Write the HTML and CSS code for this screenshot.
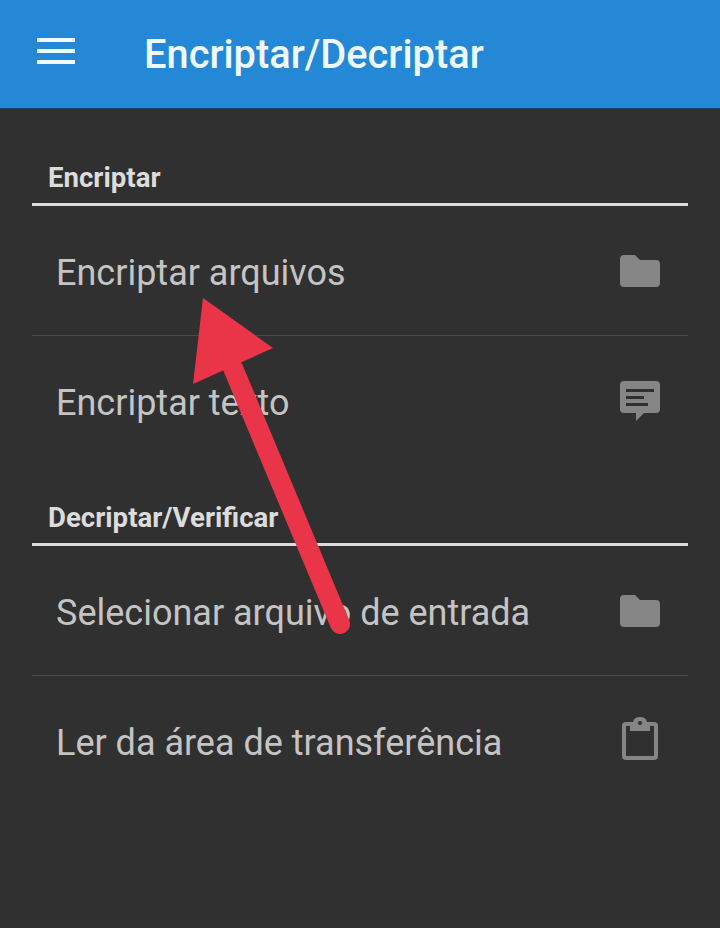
FILE: index.html
```html
<!DOCTYPE html>
<html>
<head>
    <title>Encriptar/Decriptar</title>
    <link rel="stylesheet" href="styles.css">
</head>
<body>
    <div class="toolbar">
        <svg class="menu-icon" width="38" height="26" viewBox="0 0 38 26">
            <rect x="0" y="0" width="38" height="4" fill="#eefaff"/>
            <rect x="0" y="11" width="38" height="4" fill="#eefaff"/>
            <rect x="0" y="22" width="38" height="4" fill="#eefaff"/>
        </svg>
        <h1>Encriptar/Decriptar</h1>
    </div>

    <div class="content">
        <div class="section first">
            <h2>Encriptar</h2>
            <div class="row">
                <span>Encriptar arquivos</span>
                <svg class="icon" width="40" height="32" viewBox="0 0 40 32">
                    <path d="M4 0H15L20 5H36Q40 5 40 9V28Q40 32 36 32H4Q0 32 0 28V4Q0 0 4 0Z"/>
                </svg>
            </div>
            <div class="row">
                <span>Encriptar texto</span>
                <svg class="icon" width="40" height="40" viewBox="0 0 40 40">
                    <path fill-rule="evenodd" d="M4 0H36Q40 0 40 4V28Q40 32 36 32H24L16 40V32H4Q0 32 0 28V4Q0 0 4 0ZM6 8V11H34V8ZM6 15V18H24V15ZM6 22V25H28V22Z"/>
                </svg>
            </div>
        </div>

        <div class="section">
            <h2>Decriptar/Verificar</h2>
            <div class="row">
                <span>Selecionar arquivo de entrada</span>
                <svg class="icon" width="40" height="32" viewBox="0 0 40 32">
                    <path d="M4 0H15L20 5H36Q40 5 40 9V28Q40 32 36 32H4Q0 32 0 28V4Q0 0 4 0Z"/>
                </svg>
            </div>
            <div class="row">
                <span>Ler da área de transferência</span>
                <svg class="icon clip" width="36" height="44" viewBox="0 0 36 44">
                    <path fill-rule="evenodd" d="M4 5H11Q12 0 18 0Q24 0 25 5H32Q36 5 36 9V39Q36 43 32 43H4Q0 43 0 39V9Q0 5 4 5ZM4 9V39H32V9H28V14H8V9ZM18 4A2 2 0 1 0 18 8A2 2 0 1 0 18 4Z"/>
                </svg>
            </div>
        </div>
    </div>

    <svg class="arrow" width="720" height="928" viewBox="0 0 720 928">
        <path d="M233 368L340 624" stroke="#ea3448" stroke-width="20" stroke-linecap="round" fill="none"/>
        <path d="M203 298L273 348L193 384Z" fill="#ea3448"/>
    </svg>
</body>
</html>
```

FILE: styles.css
```css
html, body {
    height: 100%;
}

body {
    margin: 0;
    background-color: #303030;
    font-family: Roboto, "Liberation Sans", sans-serif;
    overflow: hidden;
}

.toolbar {
    display: flex;
    align-items: center;
    height: 109px;
    background-color: #2488d6;
    border-bottom: 1px solid #14405f;
    box-sizing: border-box;
    padding-left: 37px;
}

.toolbar h1 {
    margin: 0 0 0 69px;
    font-size: 39.8px;
    font-weight: 500;
    color: #eefaff;
}

.menu-icon {
    margin-bottom: 6px;
}

.content {
    padding: 0 32px;
}

.section {
    padding-top: 36px;
}

.section.first {
    padding-top: 53px;
}

.section h2 {
    margin: 0;
    height: 44px;
    padding-left: 16px;
    box-sizing: border-box;
    line-height: 32px;
    font-size: 27.6px;
    font-weight: 700;
    color: #dcdcdc;
    border-bottom: 3px solid #dcdcdc;
}

.row {
    display: flex;
    align-items: center;
    justify-content: space-between;
    height: 130px;
    box-sizing: border-box;
    padding: 0 28px 0 24px;
    border-bottom: 1px solid #4a4a4a;
    font-size: 36px;
    color: #c4c4c4;
}

.row span {
    padding-top: 4px;
}

.row:last-child {
    border-bottom: none;
}

.icon {
    fill: #858585;
}

.icon.clip {
    margin-right: 2px;
    margin-bottom: 4px;
}

.arrow {
    position: absolute;
    left: 0;
    top: 0;
}
```
